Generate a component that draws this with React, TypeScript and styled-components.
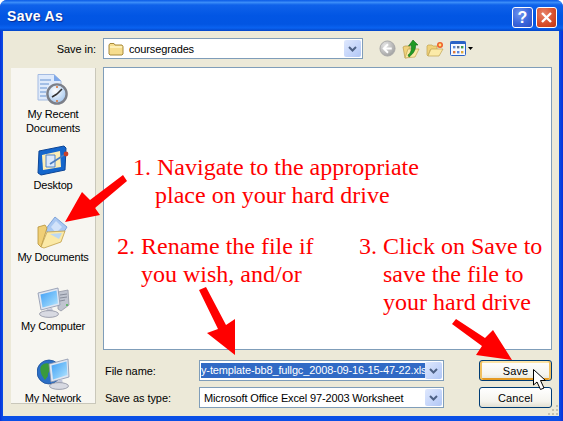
import React from 'react';
import styled, { createGlobalStyle } from 'styled-components';

const Global = createGlobalStyle`
  html, body { margin: 0; padding: 0; background: #fff; }
  body { width: 563px; height: 421px; overflow: hidden; font-family: "Liberation Sans", Arial, sans-serif; }
`;

const Win = styled.div`
  position: relative;
  width: 563px;
  height: 421px;
  display: flex;
  flex-direction: column;
  overflow: hidden;
  border-radius: 7px 7px 0 0;
  background: linear-gradient(90deg, #0831d9 0, #0a4fe6 3px, #0a4fe6 559px, #0831d9 563px);
`;

const TitleBar = styled.div`
  height: 31px;
  flex: none;
  box-sizing: border-box;
  display: flex;
  align-items: center;
  justify-content: space-between;
  padding: 0 6px 0 7px;
  background: linear-gradient(180deg, #0a5ae6 0%, #3a8cf8 8%, #0f62ea 16%, #0256e4 50%, #0255e2 78%, #0a62f0 90%, #0345c8 100%);
`;

const Title = styled.span`
  color: #fff;
  font-size: 14px;
  font-weight: 700;
  letter-spacing: 0.3px;
  text-shadow: 1px 1px 1px #0a2a90;
`;

const Caption = styled.div`
  display: flex;
  gap: 3px;
  margin-top: 4px;
`;

const CapBtn = styled.div<{ $close?: boolean }>`
  width: 21px;
  height: 21px;
  box-sizing: border-box;
  border: 1px solid #fff;
  border-radius: 3px;
  display: flex;
  align-items: center;
  justify-content: center;
  color: #fff;
  font-size: 16px;
  font-weight: 700;
  background: ${p => p.$close
    ? 'radial-gradient(circle at 35% 30%, #e8846a 0%, #d8502e 55%, #bf3412 100%)'
    : 'radial-gradient(circle at 35% 30%, #6f94ee 0%, #3a66dc 55%, #2a4cc0 100%)'};
`;

const Frame = styled.div`
  flex: 1;
  min-height: 0;
  margin: 0 4px 5px 3px;
  background: #ece9d8;
  display: flex;
  flex-direction: column;
  padding: 7px 7px 0 8px;
`;

const TopRow = styled.div`
  height: 21px;
  display: flex;
  align-items: center;
`;

const FieldLabel = styled.span<{ $w: number; $align?: string }>`
  width: ${p => p.$w}px;
  flex: none;
  font-size: 11px;
  letter-spacing: -0.05px;
  color: #000;
  text-align: ${p => p.$align || 'left'};
  white-space: nowrap;
`;

const Combo = styled.div<{ $w: number; $gap?: number }>`
  width: ${p => p.$w}px;
  height: 21px;
  flex: none;
  margin-left: ${p => p.$gap || 0}px;
  box-sizing: border-box;
  border: 1px solid #7f9db9;
  background: #fff;
  display: flex;
  align-items: center;
  padding: 1px;
  font-size: 11px;
  letter-spacing: -0.14px;
  color: #000;
  white-space: nowrap;
`;

const ComboText = styled.span<{ $selected?: boolean }>`
  flex: 1;
  min-width: 0;
  overflow: hidden;
  display: flex;
  align-items: center;
  gap: 5px;
  height: 100%;
  padding-left: ${p => (p.$selected ? 0 : 3)}px;
`;

const Selected = styled.span`
  background: #316ac5;
  color: #fff;
  line-height: 15px;
  padding-right: 1px;
`;

const DropBtn = styled.div`
  width: 17px;
  height: 17px;
  flex: none;
  border-radius: 2px;
  background: linear-gradient(135deg, #dfe8fd 0%, #c6d6fa 55%, #b0c6f5 100%);
  display: flex;
  align-items: center;
  justify-content: center;
`;

const Toolbar = styled.div`
  display: flex;
  align-items: center;
  gap: 6px;
  margin-left: 16px;
`;

const Content = styled.div`
  flex: none;
  display: flex;
  gap: 7px;
  margin-top: 8px;
  height: 337px;
`;

const Places = styled.div`
  width: 85px;
  height: 336px;
  flex: none;
  box-sizing: border-box;
  margin-top: 1px;
  background: #f7f6f1;
  border-right: 1px solid #c9c7ba;
  border-bottom: 1px solid #c9c7ba;
  display: flex;
  flex-direction: column;
  align-items: center;
  padding-top: 6px;
  overflow: hidden;
`;

const Place = styled.div`
  height: 71px;
  flex: none;
  width: 100%;
  display: flex;
  flex-direction: column;
  align-items: center;
`;

const PlaceLabel = styled.span`
  margin-top: 1px;
  font-size: 11px;
  line-height: 14px;
  letter-spacing: -0.18px;
  color: #000;
  text-align: center;
`;

const Main = styled.div`
  flex: 1;
  min-width: 0;
  display: flex;
  flex-direction: column;
`;

const FileList = styled.div`
  height: 283px;
  flex: none;
  box-sizing: border-box;
  border: 1px solid #7f9db9;
  background: #fff;
`;

const Footer = styled.div`
  display: flex;
  justify-content: space-between;
  margin-top: 10px;
`;

const Fields = styled.div`
  display: flex;
  flex-direction: column;
  gap: 6px;
`;

const FieldRow = styled.div`
  display: flex;
  align-items: center;
  padding-left: 2px;
`;

const Buttons = styled.div`
  display: flex;
  flex-direction: column;
  gap: 6px;
`;

const Btn = styled.div<{ $default?: boolean }>`
  width: 73px;
  height: 21px;
  box-sizing: border-box;
  border: 1px solid #003c74;
  border-radius: 3px;
  display: flex;
  align-items: center;
  justify-content: center;
  font-size: 11px;
  letter-spacing: 0.1px;
  color: #000;
  background: linear-gradient(180deg, #fff 0%, #f5f4ee 70%, #e3e0d2 100%);
  box-shadow: ${p => (p.$default
    ? 'inset 2px 0 0 #f0c060, inset -2px 0 0 #f0c060, inset 0 2px 0 #fce4a8, inset 0 -2px 0 #e59a22'
    : 'none')};
`;

const Note = styled.div<{ $x: number; $y: number }>`
  position: absolute;
  left: ${p => p.$x}px;
  top: ${p => p.$y}px;
  color: #ff0000;
  font-family: "Liberation Serif", "Times New Roman", serif;
  font-size: 24px;
  line-height: 28px;
  white-space: nowrap;
`;

const Indent = styled.div<{ $w: number }>`
  padding-left: ${p => p.$w}px;
`;

const Overlay = styled.svg`
  position: absolute;
  left: 0;
  top: 0;
  pointer-events: none;
`;

const Grip = styled.svg`
  position: absolute;
  right: 4px;
  bottom: 5px;
`;

const Arrow = () => (
  <svg width="9" height="6" viewBox="0 0 9 6">
    <path d="M1 1 L4.5 4.5 L8 1" fill="none" stroke="#4d6185" strokeWidth="2" />
  </svg>
);

const FolderIcon = () => (
  <svg width="16" height="14" viewBox="0 0 16 14">
    <path d="M1 3 L2 1.5 H6 L7 3 H14 L15 4.5 V12 L14 13 H2 L1 12 Z" fill="#f6dd8e" stroke="#a88a3a" strokeWidth="1" />
    <path d="M2 5 H14" stroke="#fff4c4" strokeWidth="1.4" />
  </svg>
);

const BackIcon = () => (
  <svg width="17" height="17" viewBox="0 0 18 18">
    <defs>
      <radialGradient id="bk" cx="35%" cy="30%" r="80%">
        <stop offset="0" stopColor="#e6e6e6" />
        <stop offset="1" stopColor="#9c9c9c" />
      </radialGradient>
    </defs>
    <circle cx="9" cy="9" r="8" fill="url(#bk)" stroke="#a8a8a8" />
    <path d="M9.5 4.5 L5 9 L9.5 13.5 M5.5 9 H13.5" fill="none" stroke="#fff" strokeWidth="2" />
  </svg>
);

const UpIcon = () => (
  <svg width="18" height="20" viewBox="0 0 18 20">
    <path d="M1 8 L3 7 H8 V18 L3 19 Z" fill="#f0d27a" stroke="#b89a4a" strokeWidth="0.7" />
    <path d="M3 19 L6 10 H17 L13 18 Z" fill="#fbe9a6" stroke="#c2a552" strokeWidth="0.7" />
    <path d="M6 16 C9 14 10 10 9 6 L6.5 7 L11 1 L16 6 L13.5 6 C14 11 11 15 7 18 Z" fill="#1f9a26" stroke="#0e6a14" strokeWidth="0.6" />
  </svg>
);

const NewFolderIcon = () => (
  <svg width="18" height="16" viewBox="0 0 18 16">
    <path d="M1 5 L2 4 H6 L7 5 H11 V9 H4 L2 15 L1 14 Z" fill="#f0d27a" stroke="#c2a552" strokeWidth="0.7" />
    <path d="M2 15 L5 8 H17 L13 15 Z" fill="#fbeaa8" stroke="#c2a552" strokeWidth="0.7" />
    <circle cx="14" cy="4" r="3" fill="#f0602a" />
    <circle cx="14" cy="4" r="1.4" fill="#ffe27a" />
  </svg>
);

const ViewsIcon = () => (
  <svg width="24" height="15" viewBox="0 0 24 15">
    <rect x="0.5" y="0.5" width="15" height="14" rx="1" fill="#f6f8fd" stroke="#2a62c6" />
    <rect x="0.5" y="0.5" width="15" height="2.5" fill="#2a62c6" />
    <rect x="3" y="5" width="2.4" height="2.4" fill="#5a86d8" />
    <rect x="7" y="5" width="2.4" height="2.4" fill="#5f6f8a" />
    <rect x="11" y="5" width="2.4" height="2.4" fill="#3f9a4a" />
    <rect x="3" y="10" width="2.4" height="2.4" fill="#e07a3a" />
    <rect x="7" y="10" width="2.4" height="2.4" fill="#5a86d8" />
    <rect x="11" y="10" width="2.4" height="2.4" fill="#e0a83a" />
    <path d="M18 6 H23 L20.5 9 Z" fill="#000" />
  </svg>
);

const RecentIcon = () => (
  <svg width="32" height="32" viewBox="0 0 32 32">
    <defs>
      <radialGradient id="clk" cx="40%" cy="35%" r="70%">
        <stop offset="0" stopColor="#ffffff" />
        <stop offset="1" stopColor="#9fc4ee" />
      </radialGradient>
    </defs>
    <path d="M1 0.5 H17 L24 7 V26 H1 Z" fill="#dfeafb" stroke="#a4bbe2" />
    <path d="M17 0.5 V7 H24 Z" fill="#7fa8e8" />
    <path d="M3 6 H14 M3 10 H12 M3 14 H10 M3 18 H9 M3 22 H9" stroke="#8fb0e0" strokeWidth="1.6" />
    <circle cx="20" cy="20" r="9.6" fill="url(#clk)" stroke="#7c7f88" strokeWidth="2.4" />
    <path d="M20 20 L25 15 M20 20 L15 23" stroke="#333" strokeWidth="1.6" />
    <circle cx="20" cy="13" r="1" fill="#e0702a" />
    <circle cx="20" cy="27" r="1" fill="#e0702a" />
  </svg>
);

const DesktopIcon = () => (
  <svg width="32" height="32" viewBox="0 0 32 32">
    <path d="M2 6 L27 1 L29 3 L28 25 L4 30 L1 28 Z" fill="#1466cc" stroke="#0c4596" />
    <path d="M5 10 L23 6 L24 22 L6 25 Z" fill="#fdeeb6" />
    <path d="M9 10 H18 V22 H9 Z" fill="#dbe9fb" stroke="#4f83c9" />
    <path d="M13 19 L27 10" stroke="#4a7cc0" strokeWidth="1.6" />
    <circle cx="29" cy="9" r="2.4" fill="#c8402a" />
  </svg>
);

const DocsIcon = () => (
  <svg width="32" height="33" viewBox="0 0 32 33">
    <path d="M8 14 L18 1 L30 11 L22 24 Z" fill="#a9c8f2" stroke="#7fa3d8" />
    <path d="M14 11 L19 5 L25 11 L19 17 Z" fill="#d2e3fa" />
    <path d="M1 11 L8 9 L10 12 L4 31 L1 28 Z" fill="#f0cf76" stroke="#b59238" strokeWidth="0.8" />
    <path d="M4 31 L10 16 L28 15 L24 26 L7 32 Z" fill="#fbe9a6" stroke="#c2a048" strokeWidth="0.8" />
    <path d="M13 18 L25 17 L22 23 Z" fill="#bcd8f2" />
  </svg>
);

const Screen = ({ id }: { id: string }) => (
  <defs>
    <linearGradient id={id} x1="0" y1="0" x2="1" y2="1">
      <stop offset="0" stopColor="#3f9ef5" />
      <stop offset="0.7" stopColor="#8fd0fb" />
      <stop offset="1" stopColor="#c4e8fd" />
    </linearGradient>
  </defs>
);

const ComputerIcon = () => (
  <svg width="33" height="31" viewBox="0 0 33 31">
    <Screen id="scr1" />
    <path d="M21 5 L31 3 L32 18 L24 24 L21 22 Z" fill="#c0c4cf" stroke="#9498a6" strokeWidth="0.8" />
    <path d="M23 8 L30 7 M23 11 L30 10 M23 14 L28 13" stroke="#878d9b" />
    <circle cx="30" cy="18" r="1" fill="#45b24a" />
    <path d="M1 6 L21 1 L23 18 L4 23 Z" fill="#dfe6f2" stroke="#8a93ab" strokeWidth="0.8" />
    <path d="M3.5 7.5 L19.5 3.5 L21 16.5 L5.5 20.5 Z" fill="url(#scr1)" />
    <path d="M10 22 L15 21 L17 26 L8 26 Z" fill="#c2c6d8" />
    <ellipse cx="12" cy="27" rx="9.5" ry="3.4" fill="#d8dae2" stroke="#8d90a0" strokeWidth="0.8" />
  </svg>
);

const NetworkIcon = () => (
  <svg width="33" height="32" viewBox="0 0 33 32">
    <Screen id="scr2" />
    <circle cx="12" cy="14" r="12" fill="#2b6fc6" stroke="#1a4f9a" strokeWidth="0.8" />
    <path d="M4 8 C8 4 13 5 14 8 C15 12 10 14 11 18 L8 22 C5 18 2 13 4 8 Z" fill="#3a9a3c" />
    <path d="M12 6 L31 1 L32 19 L14 24 Z" fill="#dfe6f2" stroke="#8a93ab" strokeWidth="0.8" />
    <path d="M14.5 7.5 L29.5 3.5 L30.5 17 L16 21.5 Z" fill="url(#scr2)" />
    <path d="M20 23 L25 21 L26 26 L18 27 Z" fill="#c2c6d8" />
    <ellipse cx="22" cy="28" rx="9.5" ry="3.4" fill="#d8dae2" stroke="#8d90a0" strokeWidth="0.8" />
  </svg>
);

const App: React.FC = () => (
  <Win>
    <Global />
    <TitleBar>
      <Title>Save As</Title>
      <Caption>
        <CapBtn>?</CapBtn>
        <CapBtn $close>
          <svg width="13" height="13" viewBox="0 0 13 13">
            <path d="M2 2 L11 11 M11 2 L2 11" stroke="#fff" strokeWidth="2.4" />
          </svg>
        </CapBtn>
      </Caption>
    </TitleBar>
    <Frame>
      <TopRow>
        <FieldLabel $w={85} $align="right">Save in:</FieldLabel>
        <Combo $w={260} $gap={7}>
          <ComboText>
            <FolderIcon />
            coursegrades
          </ComboText>
          <DropBtn><Arrow /></DropBtn>
        </Combo>
        <Toolbar>
          <BackIcon />
          <UpIcon />
          <NewFolderIcon />
          <ViewsIcon />
        </Toolbar>
      </TopRow>
      <Content>
        <Places>
          <Place><RecentIcon /><PlaceLabel>My Recent<br />Documents</PlaceLabel></Place>
          <Place><DesktopIcon /><PlaceLabel>Desktop</PlaceLabel></Place>
          <Place><DocsIcon /><PlaceLabel>My Documents</PlaceLabel></Place>
          <Place><ComputerIcon /><PlaceLabel>My Computer</PlaceLabel></Place>
          <Place><NetworkIcon /><PlaceLabel>My Network</PlaceLabel></Place>
        </Places>
        <Main>
          <FileList />
          <Footer>
            <Fields>
              <FieldRow>
                <FieldLabel $w={94}>File name:</FieldLabel>
                <Combo $w={245}>
                  <ComboText $selected>
                    <Selected>y-template-bb8_fullgc_2008-09-16-15-47-22.xls</Selected>
                  </ComboText>
                  <DropBtn><Arrow /></DropBtn>
                </Combo>
              </FieldRow>
              <FieldRow>
                <FieldLabel $w={94}>Save as type:</FieldLabel>
                <Combo $w={245}>
                  <ComboText>Microsoft Office Excel 97-2003 Worksheet</ComboText>
                  <DropBtn><Arrow /></DropBtn>
                </Combo>
              </FieldRow>
            </Fields>
            <Buttons>
              <Btn $default>Save</Btn>
              <Btn>Cancel</Btn>
            </Buttons>
          </Footer>
        </Main>
      </Content>
    </Frame>

    <Grip width="12" height="12" viewBox="0 0 12 12">
      <path d="M9 1h2v2H9z M5 5h2v2H5z M9 5h2v2H9z M1 9h2v2H1z M5 9h2v2H5z M9 9h2v2H9z" fill="#c4c1b0" />
    </Grip>

    <Note $x={133} $y={153}>
      1. Navigate to the appropriate
      <Indent $w={22}>place on your hard drive</Indent>
    </Note>
    <Note $x={117} $y={232}>
      2. Rename the file if
      <Indent $w={24}>you wish, and/or</Indent>
    </Note>
    <Note $x={359} $y={232}>
      3. Click on Save to
      <Indent $w={24}>save the file to</Indent>
      <Indent $w={24}>your hard drive</Indent>
    </Note>

    <Overlay width="563" height="421" viewBox="0 0 563 421">
      <path d="M123 175 L127 181 L95 208 L100 215 L65 222 L82 192 L90 200 Z" fill="#ff0000" />
      <path d="M199 290 L206 287 L226 325 L235 319 L235 355 L207 333 L218 329 Z" fill="#ff0000" />
      <path d="M456 319 L485 338 L493 330 L512 360 L476 355 L482 346 L452 324 Z" fill="#ff0000" />
      <path d="M533.5 369.5 V385 L537 382 L540.5 389.5 L544 388 L540.5 380.5 L545.5 380.5 Z" fill="#fff" stroke="#000" strokeWidth="1" />
    </Overlay>
  </Win>
);

export default App;
